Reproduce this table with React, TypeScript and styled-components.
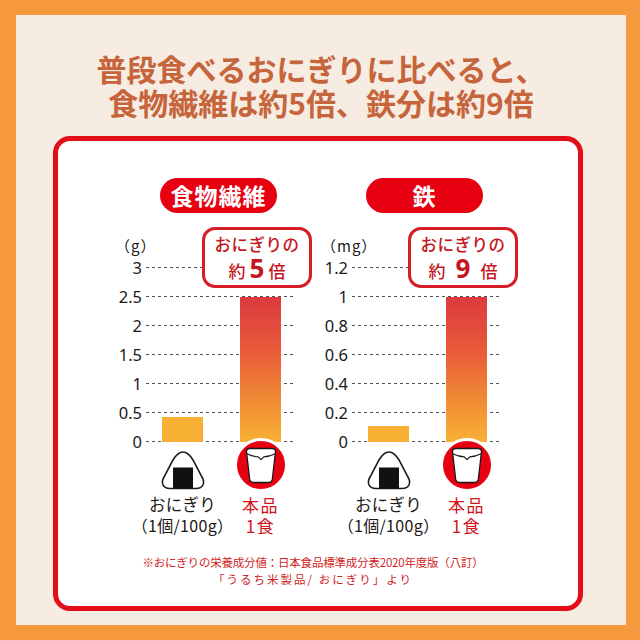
import React from "react";
import styled, { createGlobalStyle } from "styled-components";

const Global = createGlobalStyle`
  html, body { margin: 0; padding: 0; background: #f6993d; }
  body { font-family: "Noto Sans CJK JP", "Noto Sans", sans-serif; }
`;

const Frame = styled.div`
  width: 640px;
  height: 640px;
  box-sizing: border-box;
  padding: 15px 14px 15px 16px;
  background: #f6993d;
`;

const Panel = styled.div`
  width: 100%;
  height: 100%;
  box-sizing: border-box;
  background: #f7ece2;
  padding-top: 36px;
  display: flex;
  flex-direction: column;
`;

const Title = styled.h1`
  margin: 0;
  display: flex;
  flex-direction: column;
  align-items: center;
  color: #c6653c;
  font-family: "Noto Sans CJK JP", sans-serif;
  font-size: 30px;
  font-weight: 700;
`;

const TitleLine = styled.span`
  display: block;
  height: 34px;
  line-height: 34px;
  white-space: nowrap;
`;

const Card = styled.div`
  margin: 17px 0 0 37px;
  width: 530px;
  height: 475px;
  box-sizing: border-box;
  border: 5px solid #e20f19;
  border-radius: 17px;
  background: #fff;
  padding-top: 37px;
  display: flex;
  flex-direction: column;
`;

const Charts = styled.div`
  display: flex;
  padding-left: 42px;
`;

const Chart = styled.div`
  position: relative;
  width: 206px;
  display: flex;
  flex-direction: column;
`;

const Pill = styled.div`
  margin-left: 60px;
  width: 117px;
  height: 35px;
  border-radius: 18px;
  background: #e60012;
  color: #fff;
  font-size: 23px;
  font-weight: 700;
  letter-spacing: 1px;
  line-height: 35px;
  text-align: center;
`;

const Unit = styled.div`
  margin-top: 26px;
  padding-left: 15px;
  height: 14px;
  line-height: 14px;
  font-size: 15px;
  letter-spacing: 1px;
  color: #231815;
  white-space: nowrap;
`;

const Body = styled.div`
  display: grid;
  grid-template-columns: 46px 150px;
`;

const Labels = styled.div`
  display: flex;
  flex-direction: column;
`;

const Tick = styled.div`
  height: 29px;
  display: flex;
  align-items: center;
  justify-content: flex-end;
  padding-right: 4px;
  font-family: "Noto Sans", sans-serif;
  font-size: 16.5px;
  color: #231815;
`;

const Plot = styled.div`
  display: grid;
  & > * {
    grid-area: 1 / 1;
  }
`;

const Lines = styled.div`
  display: flex;
  flex-direction: column;
`;

const Line = styled.div`
  height: 29px;
  display: flex;
  align-items: center;
  &::after {
    content: "";
    flex: 1;
    margin-right: 2px;
    height: 1px;
    background: repeating-linear-gradient(to right, #555 0 3px, transparent 3px 6px);
  }
`;

const Bars = styled.div`
  display: flex;
  align-items: flex-end;
  gap: 37px;
  padding: 0 0 14.5px 16px;
`;

const Bar = styled.div<{ $hot?: boolean }>`
  width: 41px;
  background: ${(p) =>
    p.$hot
      ? "linear-gradient(to bottom, #db3b3d 0%, #e8583a 35%, #f08a35 70%, #f9b137 100%)"
      : "#f8b034"};
`;

const Columns = styled.div<{ $top: number }>`
  display: flex;
  gap: 37px;
  padding-left: 62px;
  margin-top: ${(p) => p.$top}px;
`;

const Cell = styled.div`
  width: 41px;
  display: flex;
  flex-direction: column;
  align-items: center;
  white-space: nowrap;
`;

const IconBox = styled.div<{ $top: number }>`
  margin-top: ${(p) => p.$top}px;
  display: flex;
`;

const Name = styled.div<{ $red?: boolean; $size: number }>`
  font-size: ${(p) => p.$size}px;
  line-height: 21px;
  color: ${(p) => (p.$red ? "#d0141c" : "#231815")};
  letter-spacing: ${(p) => (p.$red ? "1.5px" : "0.3px")};
  font-weight: 400;
`;

const Callout = styled.div`
  position: absolute;
  top: 49px;
  left: 102px;
  width: 110px;
  height: 61px;
  box-sizing: border-box;
  border: 3px solid #d81c23;
  border-radius: 13px;
  background: #fff;
  color: #c4161e;
  display: flex;
  flex-direction: column;
  align-items: center;
  justify-content: center;
`;

const CalloutTop = styled.div`
  font-size: 16.5px;
  line-height: 21px;
  letter-spacing: 0.5px;
  font-weight: 500;
`;

const CalloutBottom = styled.div<{ $gap: number }>`
  display: flex;
  align-items: baseline;
  gap: ${(p) => p.$gap}px;
  height: 27px;
  line-height: 27px;
  font-size: 17px;
  font-weight: 500;
`;

const Big = styled.span`
  font-family: "Noto Sans", sans-serif;
  font-size: 26px;
  font-weight: 700;
`;

const Footnote = styled.div`
  margin-top: 18px;
  padding-right: 10px;
  text-align: center;
  color: #d11b23;
  font-size: 11.5px;
  line-height: 17px;
`;

const FootLine = styled.div<{ $ls: number }>`
  letter-spacing: ${(p) => p.$ls}px;
  white-space: nowrap;
`;

const Onigiri = () => (
  <svg width="46" height="41" viewBox="0 0 46 41">
    <path
      d="M23 2 C27 2 30 5 33 10 L42 27 C45.5 33 43 38.5 36 38.5 L10 38.5 C3 38.5 0.5 33 4 27 L13 10 C16 5 19 2 23 2 Z"
      fill="#fff"
      stroke="#1a1a1a"
      strokeWidth="1.6"
    />
    <rect x="13" y="17.5" width="20" height="20.5" fill="#111" />
  </svg>
);

const Cup = () => (
  <svg width="54" height="54" viewBox="0 0 54 54">
    <circle cx="27" cy="27" r="25.5" fill="#e60012" stroke="#fff" strokeWidth="3" />
    <path
      d="M12.5 13.5 Q12.5 10.5 15.5 10.5 L38.5 10.5 Q41.5 10.5 41.5 13.5 L38.3 41.5 Q37.8 44.5 34.8 44.5 L19.2 44.5 Q16.2 44.5 15.7 41.5 Z"
      fill="#fff"
      stroke="#1a1a1a"
      strokeWidth="1.3"
      strokeLinejoin="round"
    />
    <path
      d="M12.7 15.8 Q19 18.8 24.3 18.9 L27 21.6 L29.7 18.9 Q35 18.8 41.3 15.8"
      fill="none"
      stroke="#1a1a1a"
      strokeWidth="1.2"
      strokeLinejoin="round"
    />
  </svg>
);

type ChartData = {
  key: string;
  title: string;
  unit: string;
  ticks: string[];
  max: number;
  values: [number, number];
  ratio: string;
  gap: number;
};

const charts: ChartData[] = [
  {
    key: "fiber",
    title: "食物繊維",
    unit: "（g）",
    ticks: ["3", "2.5", "2", "1.5", "1", "0.5", "0"],
    max: 3,
    values: [0.43, 2.5],
    ratio: "5",
    gap: 4,
  },
  {
    key: "iron",
    title: "鉄",
    unit: "（mg）",
    ticks: ["1.2", "1", "0.8", "0.6", "0.4", "0.2", "0"],
    max: 1.2,
    values: [0.11, 1.0],
    ratio: "9",
    gap: 10,
  },
];

const SCALE = 174;

function ChartBlock({ d }: { d: ChartData }) {
  return (
    <Chart>
      <Pill>{d.title}</Pill>
      <Unit>{d.unit}</Unit>
      <Body>
        <Labels>
          {d.ticks.map((t) => (
            <Tick key={t}>{t}</Tick>
          ))}
        </Labels>
        <Plot>
          <Lines>
            {d.ticks.map((t) => (
              <Line key={t} />
            ))}
          </Lines>
          <Bars>
            <Bar style={{ height: `${(d.values[0] / d.max) * SCALE}px` }} />
            <Bar $hot style={{ height: `${(d.values[1] / d.max) * SCALE}px` }} />
          </Bars>
        </Plot>
      </Body>
      <Columns $top={-14.5}>
        <Cell>
          <IconBox $top={8.5}>
            <Onigiri />
          </IconBox>
        </Cell>
        <Cell>
          <IconBox $top={-4}>
            <Cup />
          </IconBox>
        </Cell>
      </Columns>
      <Columns $top={2}>
        <Cell>
          <Name $size={16.5}>おにぎり</Name>
          <Name $size={16}>（1個/100g）</Name>
        </Cell>
        <Cell>
          <Name $red $size={17}>本品</Name>
          <Name $red $size={17}>1食</Name>
        </Cell>
      </Columns>
      <Callout>
        <CalloutTop>おにぎりの</CalloutTop>
        <CalloutBottom $gap={d.gap}>
          <span>約</span>
          <Big>{d.ratio}</Big>
          <span>倍</span>
        </CalloutBottom>
      </Callout>
    </Chart>
  );
}

export default function App() {
  return (
    <>
      <Global />
      <Frame>
        <Panel>
          <Title>
            <TitleLine>普段食べるおにぎりに比べると、</TitleLine>
            <TitleLine>食物繊維は約5倍、鉄分は約9倍</TitleLine>
          </Title>
          <Card>
            <Charts>
              {charts.map((d) => (
                <ChartBlock key={d.key} d={d} />
              ))}
            </Charts>
            <Footnote>
              <FootLine $ls={-0.2}>※おにぎりの栄養成分値：日本食品標準成分表2020年度版（八訂）</FootLine>
              <FootLine $ls={2}>「うるち米製品/ おにぎり」より</FootLine>
            </Footnote>
          </Card>
        </Panel>
      </Frame>
    </>
  );
}
